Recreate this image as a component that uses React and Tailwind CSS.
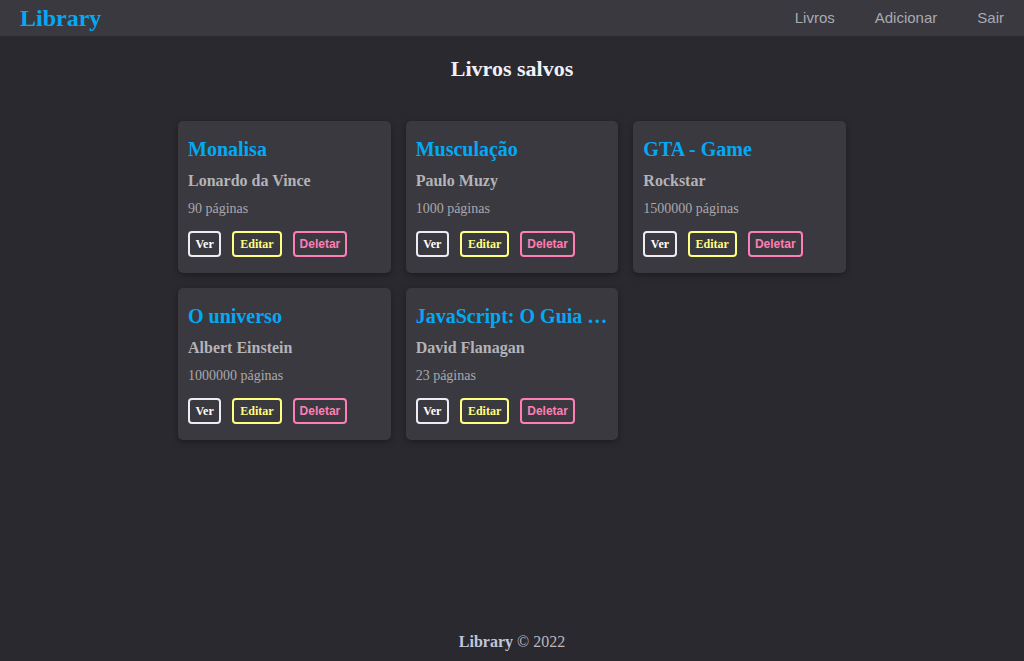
const LIVROS = [
  { titulo: 'Monalisa', autor: 'Lonardo da Vince', paginas: 90 },
  { titulo: 'Musculação', autor: 'Paulo Muzy', paginas: 1000 },
  { titulo: 'GTA - Game', autor: 'Rockstar', paginas: 1500000 },
  { titulo: 'O universo', autor: 'Albert Einstein', paginas: 1000000 },
  { titulo: 'JavaScript: O Guia Definitivo', autor: 'David Flanagan', paginas: 23 },
];

export default function App() {
  return (
    <div className="min-h-screen flex flex-col bg-[#2a292f] font-['Liberation_Serif',serif]">
      {/* Header */}
      <header className="h-[36px] flex items-center justify-between pl-[20px] pr-[20px] bg-[#3a393f]">
        <span className="text-[24px] font-bold leading-none text-[#03a9f4]">Library</span>
        <nav className="flex gap-[40px] text-[15px] text-[#a9a9b3] font-['Liberation_Sans',sans-serif]">
          <a>Livros</a>
          <a>Adicionar</a>
          <a>Sair</a>
        </nav>
      </header>

      <main className="flex-1 flex flex-col items-center">
        <h2 className="mt-[20px] text-[22px] leading-[25px] font-bold text-[#f0f0f8]">Livros salvos</h2>

        <div className="mt-[40px] w-[668px] grid grid-cols-3 gap-x-[15px] gap-y-[15px]">
          {LIVROS.map((l) => (
            <div key={l.titulo}
              className="min-w-0 rounded-[5px] bg-[#3a393f] px-[10px] pt-[17px] pb-[16px] shadow-[0_2px_6px_rgba(0,0,0,0.35)]">
              <h3 className="truncate text-[20px] leading-[23px] font-bold text-[#03a9f4]">{l.titulo}</h3>
              <p className="mt-[11px] text-[16px] leading-[18px] font-bold text-[#b3b3b8]">{l.autor}</p>
              <p className="mt-[11px] text-[14px] leading-[16px] text-[#a8a8ae]">{l.paginas} páginas</p>
              <div className="mt-[14px] flex gap-[11px]">
                <a className="h-[26px] flex items-center px-[5.5px] border-2 border-[#ececf6] rounded-[4px] text-[12px] font-bold text-white">Ver</a>
                <a className="h-[26px] flex items-center px-[6px] border-2 border-[#ffff80] rounded-[4px] text-[12px] font-bold text-[#ffff80]">Editar</a>
                <button className="h-[26px] flex items-center px-[5px] border-2 border-[#ff7eb6] rounded-[4px] text-[12px] font-bold text-[#ff7eb6] font-['Liberation_Sans',sans-serif]">Deletar</button>
              </div>
            </div>
          ))}
        </div>
      </main>

      <footer className="h-[38px] flex items-center justify-center text-[16px] text-[#b8b8c0]">
        <span className="font-bold text-[#c0c8d8]">Library</span>&nbsp;© 2022
      </footer>
    </div>
  );
}
